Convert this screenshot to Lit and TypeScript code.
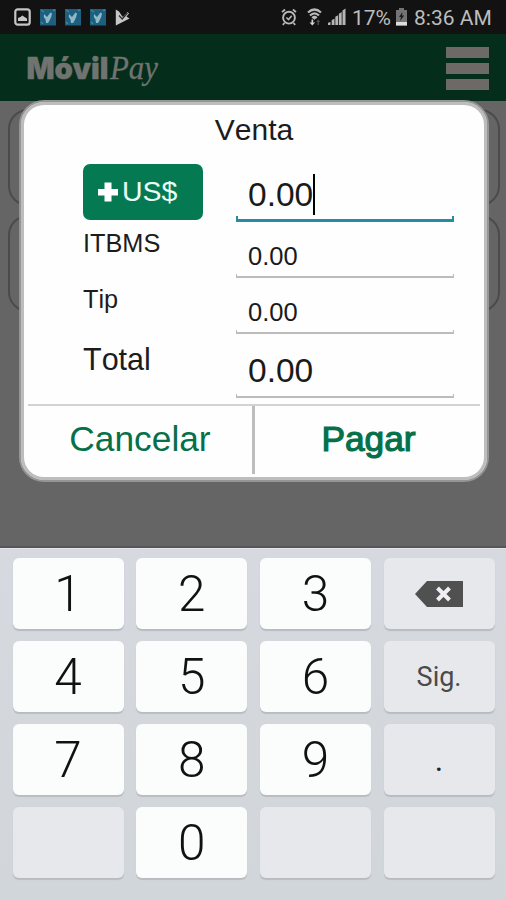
import { LitElement, html, css, nothing } from "lit";
import { customElement, property } from "lit/decorators.js";

@customElement("status-bar")
class StatusBar extends LitElement {
  static styles = css`
    :host { display: flex; align-items: center; justify-content: space-between; height: 34px; background: #121212; color: #bdbdbd; padding: 0 14px; box-sizing: border-box; font: 400 21px/34px Roboto, sans-serif; }
    .group { display: flex; align-items: center; height: 34px; }
    svg { display: block; flex: none; }
    .notices { gap: 9px; }
    .percent { margin-left: 6px; width: 40px; padding-top: 2px; }
    .battery { margin-left: 3px; }
    .clock { margin-left: 6px; width: 78px; white-space: nowrap; padding-top: 2px; }
    .wifi { margin-left: 9px; }
    .signal { margin-left: 5px; }
  `;

  private photoApp() {
    return html`<svg width="16" height="17" viewBox="0 0 16 17">
      <rect width="16" height="16.5" fill="#1d5f7f"></rect>
      <path d="M6 14l-.5-3.500L3.800 8 4 5l3 3L10.500 3.500l1.500 1-.8 3.500-1.900 4L8 14z" fill="#8fb9c6"></path>
      <path d="M1 1l3 2M13 1.500l2-.5M1 13l2 2" stroke="#3f87a3" stroke-width="1.300"></path>
    </svg>`;
  }

  render() {
    return html`
      <div class="group notices">
        <svg width="17" height="18" viewBox="0 0 17 18">
          <rect x="1.300" y="1.300" width="14.400" height="15.400" rx="2.500" fill="none" stroke="#c6c6c6" stroke-width="2.200"></rect>
          <path d="M4 13V10l2.500-1 1.800-1.500L10.500 9l2.500 1.500V13z" fill="#c6c6c6"></path>
        </svg>
        ${this.photoApp()} ${this.photoApp()} ${this.photoApp()}
        <svg width="15" height="17" viewBox="0 0 15 17">
          <path d="M.8.5L4 2.500l3 4.500 1 1 4.500-5L14 4.500 11.500 7.500 14.500 9.500.8 16.500z" fill="#c6c6c6"></path>
          <path d="M4 6.500l3.200 3.500 5.300-6" fill="none" stroke="#2b2b2b" stroke-width="1.200"></path>
        </svg>
      </div>
      <div class="group">
        <svg width="16" height="18" viewBox="0 0 16 18" fill="none" stroke="#b9b9b9">
          <circle cx="8" cy="9.700" r="5.900" stroke-width="1.900"></circle>
          <path d="M1 4.200L4 1.500M15 4.200L12 1.500M3.500 15l-1.700 1.800M12.500 15l1.700 1.800" stroke-width="1.800"></path>
          <path d="M5.300 9.500l2.200 2 3.200-3.700" stroke-width="1.600"></path>
        </svg>
        <svg class="wifi" width="17" height="18" viewBox="0 0 17 18">
          <path d="M2 4.500Q8.500-1.500 15 4.500M4 7.500Q8.500 3.200 13 7.500M6.200 10Q8.500 8 10.800 10" fill="none" stroke="#b9b9b9" stroke-width="2.200"></path>
          <path d="M8.500 12l-1.700-2.200h3.400z" fill="#b9b9b9"></path>
          <path d="M5.500 11.500v3H3.500l2.800 3 2.800-3H7.200v-3z" fill="#d0d0d0"></path>
          <path d="M11.500 17v-3H10l2.200-2.700 2.300 2.700H13v3z" fill="#4b4b4b"></path>
        </svg>
        <svg class="signal" width="18" height="18" viewBox="0 0 18 18" fill="#b5b5b5">
          <path d="M0 17v-2.200l2.500-.8v3zM3.700 17v-5l2.800-1.200V17zM7.300 17V8.800l2.800-1.600V17zM10.900 17V5.700l2.800-1.800V17zM14.500 17V2.500L17.500.5V17z"></path>
        </svg>
        <span class="percent">17%</span>
        <svg class="battery" width="13" height="18" viewBox="0 0 13 18">
          <path d="M4 0h5v2h3v15.500H1V2h3z" fill="#747474"></path>
          <rect x="1" y="14" width="11" height="3.500" fill="#dedede"></rect>
          <path d="M7.500 4L4 9h2l-1 4 4.200-5.500H7z" fill="#1c1c1c"></path>
        </svg>
        <span class="clock">8:36 AM</span>
      </div>
    `;
  }
}

@customElement("brand-header")
class BrandHeader extends LitElement {
  static styles = css`
    :host { display: flex; justify-content: space-between; align-items: center; height: 67px; padding: 0 17px 0 26px; box-sizing: border-box; background: #042e1b; color: #70736f; }
    .logo { display: block; }
    .movil { font: 900 29.500px Inter, sans-serif; stroke: currentColor; stroke-width: 0.400px; }
    .pay { font: italic 400 34px "Liberation Serif", serif; stroke: currentColor; stroke-width: 0.300px; }
    .menu { display: flex; flex-direction: column; gap: 5px; padding-top: 1px; }
    .menu span { width: 43px; height: 11px; background: #6c6967; }
  `;
  render() {
    return html`
      <svg class="logo" width="140" height="50" viewBox="0 0 140 50" fill="currentColor">
        <text class="movil" x="0.500" y="35.500" textLength="82" lengthAdjust="spacingAndGlyphs">Móvil</text>
        <text class="pay" x="84" y="35.500" textLength="48" lengthAdjust="spacingAndGlyphs">Pay</text>
      </svg>
      <div class="menu"><span></span><span></span><span></span></div>
    `;
  }
}

@customElement("amount-field")
class AmountField extends LitElement {
  @property() value = "0.00";
  @property({ type: Boolean, reflect: true }) large = false;
  @property({ type: Boolean, reflect: true }) focused = false;
  static styles = css`
    :host { display: flex; flex-direction: column; justify-content: flex-end; width: 218px; height: 100%; --line: #bcbcbc; color: #1a1a1a; font: 25.5px/30px "Liberation Sans", Arial, sans-serif; }
    :host([large]) { font-size: 33.500px; line-height: 40px; }
    :host([focused]) { --line: #268ca3; }
    .text { display: flex; align-items: center; padding: 0 0 1px 12px; }
    .caret { width: 2px; height: 41px; background: #000; }
    .line { height: 4px; border: solid var(--line); border-width: 0 1px 2px; box-sizing: border-box; margin-top: 2px; }
    :host([focused]) .line { height: 6px; border-width: 0 2px 3px; margin-top: 0; }
  `;
  render() {
    return html`
      <div class="text"><span>${this.value}</span>${this.focused ? html`<span class="caret"></span>` : nothing}</div>
      <div class="line"></div>
    `;
  }
}

@customElement("sale-dialog")
class SaleDialog extends LitElement {
  static styles = css`
    :host { display: flex; flex-direction: column; box-sizing: border-box; width: 470px; height: 382px; border: 2px solid #959595; border-radius: 25px; box-shadow: inset 0 0 0 3px #bdbdbd; background: #fefefe; font-family: "Liberation Sans", Arial, sans-serif; font-kerning: none; color: #1c1c1c; padding: 3px 7px 6px; }
    .title { text-align: center; font-size: 30px; line-height: 49px; height: 50px; }
    .row { display: flex; justify-content: space-between; padding: 0 26px 0 55px; }
    .first { height: 67px; }
    .mid { height: 56px; }
    .last { height: 64px; }
    .label { font-size: 25.300px; line-height: 30px; padding-top: 6px; }
    .last .label { font-size: 30.500px; line-height: 34px; padding-top: 8px; }
    .currency { display: flex; gap: 4px; box-sizing: border-box; width: 120px; height: 56px; margin-top: 9px; padding: 0 0 3px 15px; align-items: center; border: 0; border-radius: 7px; background: #057a52; color: #e9fff8; font: 28.500px/34px "Liberation Sans", Arial, sans-serif; }
    .currency svg { margin-top: 3px; }
    .actions { display: flex; margin-top: 6px; border-top: 2px solid #d2d2d2; color: #057049; font-size: 35.300px; line-height: 64px; text-align: center; }
    .cancel { width: 224px; box-sizing: border-box; padding-top: 1px; }
    .pay { flex: 1; border-left: 3px solid #bdbdbd; height: 68px; box-sizing: border-box; padding: 1px 0 0 2px; -webkit-text-stroke: 1.200px #057049; }
  `;
  render() {
    return html`
      <div class="title">Venta</div>
      <div class="row first">
        <button class="currency">
          <svg width="20" height="20" viewBox="0 0 20 20"><path d="M6.500 0.500h7v6.500h6.500v6.500h-6.500v6h-7v-6H0V7h6.500z" fill="#fff"></path></svg>
          <span>US$</span>
        </button>
        <amount-field large focused></amount-field>
      </div>
      <div class="row mid"><span class="label">ITBMS</span><amount-field></amount-field></div>
      <div class="row mid"><span class="label">Tip</span><amount-field></amount-field></div>
      <div class="row last"><span class="label">Total</span><amount-field large></amount-field></div>
      <div class="actions"><span class="cancel">Cancelar</span><span class="pay">Pagar</span></div>
    `;
  }
}

@customElement("number-pad")
class NumberPad extends LitElement {
  static styles = css`
    :host { display: grid; grid-template-columns: repeat(4, 111px); grid-auto-rows: 71px; column-gap: 12.700px; row-gap: 12px; padding: 9px 0 0 12.500px; box-sizing: border-box; height: 352px; background: linear-gradient(#d6d9df, #d1d6da); border-top: 1px solid #e3e5e9; font-family: Roboto, sans-serif; }
    .key { display: flex; align-items: center; justify-content: center; border-radius: 6px; background: #fbfcfc; box-shadow: 0 2px 1px #b8bcc1; color: #111; font-size: 49.500px; font-weight: 300; }
    .soft { background: #e6e8ec; font-size: 27px; font-weight: 400; color: #4a4a4a; }
    .dot { font-size: 32px; color: #222; }
  `;
  private keys = ["1", "2", "3", "back", "4", "5", "6", "Sig.", "7", "8", "9", ".", "", "0", "", ""];
  render() {
    return this.keys.map((k) => {
      if (k === "back")
        return html`<div class="key soft">
          <svg width="48" height="26" viewBox="0 0 48 26">
            <path d="M0 13L12 0h36v26H12z" fill="#505050"></path>
            <path d="M22.500 7l12 12M34.500 7l-12 12" stroke="#eeeff2" stroke-width="4"></path>
          </svg>
        </div>`;
      const soft = !/^\d$/.test(k);
      return html`<div class="key ${soft ? "soft" : ""} ${k === "." ? "dot" : ""}">${k}</div>`;
    });
  }
}

@customElement("app-root")
class AppRoot extends LitElement {
  static styles = css`
    :host { display: block; position: relative; width: 506px; height: 900px; overflow: hidden; background: #656565; }
    .page { display: flex; flex-direction: column; gap: 9px; height: 447px; box-sizing: border-box; padding: 8px 6px 0 8px; border-bottom: 2px solid #55565a; }
    .card { height: 97px; box-sizing: border-box; border: 2px solid #4b4b4b; border-radius: 20px; }
    .modal { position: absolute; left: 19px; top: 100px; }
  `;
  render() {
    return html`
      <status-bar></status-bar>
      <brand-header></brand-header>
      <div class="page"><div class="card"></div><div class="card"></div></div>
      <number-pad></number-pad>
      <sale-dialog class="modal"></sale-dialog>
    `;
  }
}
